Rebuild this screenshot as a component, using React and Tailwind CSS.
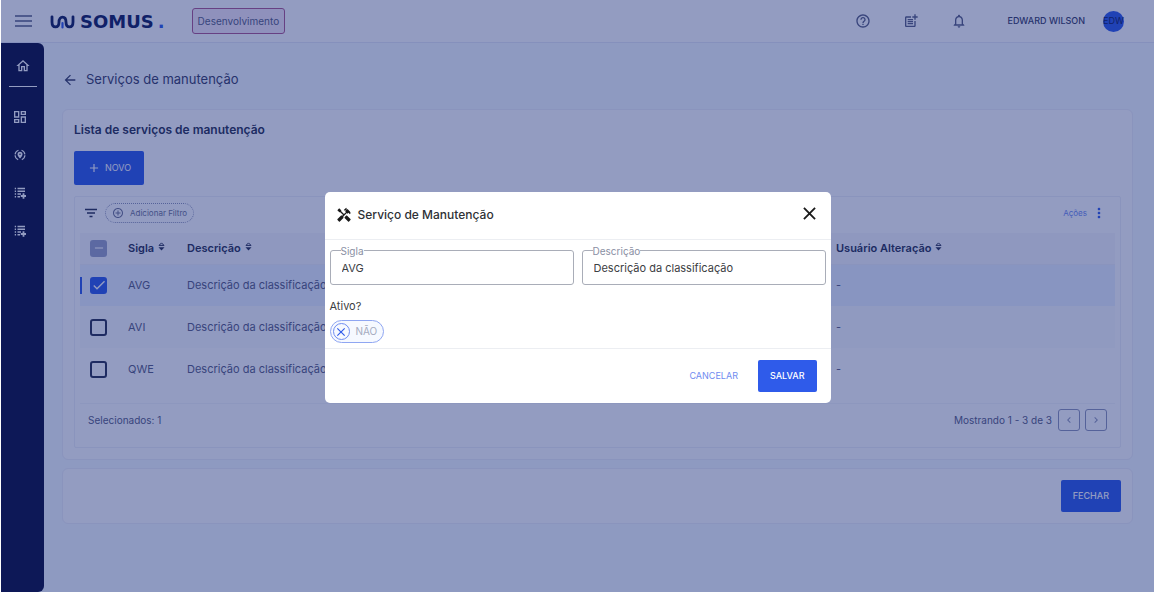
import { useState } from "react";
import {
  MdAdd,
  MdAddCircleOutline,
  MdArrowBack,
  MdCheck,
  MdChevronLeft,
  MdChevronRight,
  MdClose,
  MdHandyman,
  MdHelpOutline,
  MdMoreVert,
  MdNotificationsNone,
  MdOutlineDashboard,
  MdOutlineHome,
  MdPostAdd,
  MdRemove,
} from "react-icons/md";

const services = [
  { id: 1, sigla: "AVG", descricao: "Descrição da classificação", usuario: "-" },
  { id: 2, sigla: "AVI", descricao: "Descrição da classificação", usuario: "-" },
  { id: 3, sigla: "QWE", descricao: "Descrição da classificação", usuario: "-" },
];

function Logo() {
  return (
    <a href="#" className="flex items-center gap-1 text-[#11205e]" aria-label="Somus">
      <svg width="26" height="14" viewBox="0 0 26 14" fill="none" strokeWidth="2.8" strokeLinecap="round">
        <path d="M2 1.8 V7 C2 13.6 9 13.6 9 7 C9 0.4 16 0.4 16 7 C16 13.6 23 13.6 23 7 V1.8" stroke="currentColor" />
        <path d="M12.500 8 V12.400" stroke="#2f5bea" strokeWidth="2.2" />
      </svg>
      <span className="flex items-baseline font-['DejaVu_Sans',sans-serif] text-lg leading-5 font-bold">
        SOMUS<span className="ml-1 text-[#2f5bea]">.</span>
      </span>
    </a>
  );
}

function PinIcon() {
  return (
    <svg width="12" height="12" viewBox="0 0 24 24" fill="none">
      <path d="M9 2.5 A10 10 0 0 0 9 21.5 M15 2.5 A10 10 0 0 1 15 21.5" stroke="currentColor" strokeWidth="2.4" strokeDasharray="11 2" />
      <path d="M12 5.5a5 5 0 0 0-5 5c0 3.6 5 8.5 5 8.5s5-4.9 5-8.5a5 5 0 0 0-5-5z" fill="currentColor" />
      <circle cx="12" cy="10.5" r="1.5" fill="#0b0b3a" />
    </svg>
  );
}

function ListAddIcon() {
  return (
    <svg width="12" height="12" viewBox="0 0 24 24" fill="none" stroke="currentColor" strokeWidth="2.6">
      <path d="M7 3h15M7 8.500h15M7 14h7M7 19.500h5" />
      <path d="M1.500 3h2.600M1.500 8.500h2.600M1.500 14h2.600M1.500 19.500h2.600" />
      <path d="M19 12.500v11M13.500 18h11" strokeWidth="3.6" />
    </svg>
  );
}

function FilterIcon() {
  return (
    <svg width="16" height="16" viewBox="0 0 16 16" fill="none" stroke="#2b3252" strokeWidth="1.6">
      <path d="M2 4.500h12M4 8h8M6.500 11.500h3" />
    </svg>
  );
}

function SortIcon() {
  return (
    <svg width="7" height="9" viewBox="0 0 7 9" fill="none" className="mb-1">
      <path d="M1 3.400 L3.500 0.900 L6 3.400 Z" stroke="currentColor" strokeWidth="1" strokeLinejoin="round" />
      <path d="M0.500 5.200 H6.500 L3.500 8.500 Z" fill="currentColor" />
    </svg>
  );
}

function CheckBox({ checked, indeterminate, onChange, label }) {
  return (
    <span className="grid size-[17px] place-items-center">
      <input
        type="checkbox"
        aria-label={label}
        checked={checked}
        onChange={onChange}
        className={
          "col-start-1 row-start-1 size-[17px] appearance-none rounded-[3px] " +
          (indeterminate
            ? "bg-[#9ba3c6]"
            : checked
              ? "bg-[#2f5bea]"
              : "border-2 border-[#2b3252]")
        }
      />
      {indeterminate && <MdRemove className="pointer-events-none col-start-1 row-start-1 size-3.5 text-white" />}
      {!indeterminate && checked && (
        <MdCheck className="pointer-events-none col-start-1 row-start-1 size-4 text-white" />
      )}
    </span>
  );
}

function SortHeader({ children }) {
  return (
    <th className="pl-2 text-left font-semibold">
      <button className="flex items-center gap-1">
        {children}
        <SortIcon />
      </button>
    </th>
  );
}

function Field({ id, label, value, onChange }) {
  return (
    <div className="relative flex-1">
      <label htmlFor={id} className="absolute -top-[5px] left-[11px] bg-white text-[10px] leading-3 text-[#8a8fa3]">
        {label}
      </label>
      <input
        id={id}
        type="text"
        value={value}
        onChange={onChange}
        className="h-[35px] w-full rounded-[3px] border border-[#a9adb8] px-[11px] text-[11px] text-[#3c4043]"
      />
    </div>
  );
}

function Header() {
  return (
    <header className="flex h-[43px] items-center border-b border-[#e6eaf6] bg-white text-[#5a6082]">
      <button aria-label="Menu" className="ml-[14px]">
        <svg width="17" height="12" viewBox="0 0 17 12" stroke="currentColor" strokeWidth="1.3">
          <path d="M0 1h17M0 6h17M0 11h17" />
        </svg>
      </button>
      <div className="ml-[18px] pt-0.5">
        <Logo />
      </div>
      <span className="ml-[27px] rounded-[3px] border border-[#b0588f] bg-[#f7ecf6] px-[5px] py-1 text-[10px] leading-4 text-[#5a6082]">
        Desenvolvimento
      </span>
      <div className="ml-auto flex items-center gap-8 pr-[30px]">
        <button aria-label="Ajuda"><MdHelpOutline className="size-4" /></button>
        <button aria-label="Novo registro"><MdPostAdd className="size-4" /></button>
        <button aria-label="Notificações"><MdNotificationsNone className="size-4" /></button>
        <div className="ml-2 flex items-center gap-[18px]">
          <span className="text-[9px] font-medium text-[#3a4066]">EDWARD WILSON</span>
          <span className="flex size-[21px] items-center justify-center rounded-full bg-[#2f5bea] text-[9px] text-[#11205e]">
            EDW
          </span>
        </div>
      </div>
    </header>
  );
}

function Sidebar() {
  return (
    <nav className="flex w-[43px] shrink-0 flex-col items-center rounded-r-md bg-[#0b0f3e] pt-[15px] text-white">
      <a href="#" aria-label="Início"><MdOutlineHome className="size-4" /></a>
      <div className="mt-3 h-px w-7 bg-white" />
      <a href="#" aria-label="Painel" className="mt-[22px] -ml-1.5"><MdOutlineDashboard className="size-4" /></a>
      <div className="mt-6 -ml-1.5 flex flex-col gap-[26px]">
        <a href="#" aria-label="Localização"><PinIcon /></a>
        <a href="#" aria-label="Cadastros"><ListAddIcon /></a>
        <a href="#" aria-label="Listas"><ListAddIcon /></a>
      </div>
    </nav>
  );
}

function ServiceModal({ onClose }) {
  const [sigla, setSigla] = useState("AVG");
  const [descricao, setDescricao] = useState("Descrição da classificação");
  const [ativo, setAtivo] = useState(false);

  return (
    <div className="absolute inset-0 flex items-center justify-center bg-[#102476]/45 pt-[3px]">
      <div role="dialog" aria-label="Serviço de Manutenção" className="w-[506px] rounded-[5px] bg-white">
        <div className="flex h-12 items-center border-b border-[#eceef2] pr-[15px] pb-0.5 pl-[11px]">
          <MdHandyman className="size-4 text-[#1a1a1a]" />
          <h2 className="ml-1.5 text-xs font-medium text-[#2e3135]">Serviço de Manutenção</h2>
          <button aria-label="Fechar janela" onClick={onClose} className="ml-auto pb-0.5 text-[#1a1a1a]">
            <svg width="13" height="13" viewBox="0 0 14 14" stroke="currentColor" strokeWidth="2">
              <path d="M1 1 L13 13 M13 1 L1 13" />
            </svg>
          </button>
        </div>
        <div className="px-[5px] pt-2.5 pb-[5px]">
          <div className="flex gap-2">
            <Field id="sigla" label="Sigla" value={sigla} onChange={(ev) => setSigla(ev.target.value)} />
            <Field id="descricao" label="Descrição" value={descricao} onChange={(ev) => setDescricao(ev.target.value)} />
          </div>
          <p className="mt-[13px] text-[11px] leading-4 text-[#3c4043]">Ativo?</p>
          <label className="relative mt-1.5 flex h-[23px] w-[54px] items-center gap-1.5 rounded-full border border-[#8fa6f2] bg-[#f6f9ff] pl-0.5 text-[10px] text-[#a5abc0]">
            <input
              type="checkbox"
              checked={ativo}
              onChange={(ev) => setAtivo(ev.target.checked)}
              className="sr-only"
            />
            <span className="flex size-[17px] shrink-0 items-center justify-center rounded-full border border-[#6f8cf0] text-[#2f5bea]">
              {ativo ? <MdCheck className="size-3" /> : <MdClose className="size-3.5" />}
            </span>
            {ativo ? "SIM" : "NÃO"}
          </label>
        </div>
        <div className="flex items-center justify-end gap-5 border-t border-[#eceef2] px-3.5 py-[11px] text-[9px]">
          <button onClick={onClose} className="text-[#6f8cf0]">CANCELAR</button>
          <button className="h-8 rounded-xs bg-[#2f5bea] px-3 font-medium text-white">SALVAR</button>
        </div>
      </div>
    </div>
  );
}

export default function App() {
  const [open, setOpen] = useState(true);
  const [selected, setSelected] = useState([1]);

  function toggleRow(id) {
    setSelected(selected.includes(id) ? selected.filter((s) => s !== id) : [...selected, id]);
  }

  return (
    <div className="relative flex min-h-screen flex-col border-r-2 border-l border-white bg-[#f6fbff] bg-clip-padding font-[Inter,sans-serif]">
      <Header />
      <div className="flex flex-1">
        <Sidebar />
        <main className="min-w-0 flex-1 pr-[21px] pl-[18px]">
          <div className="flex h-[66px] items-center gap-2 pt-2 text-[#3a4066]">
            <a href="#" aria-label="Voltar"><MdArrowBack className="size-4" /></a>
            <h1 className="text-[13px]">Serviços de manutenção</h1>
          </div>

          <section className="rounded-md border border-[#eef0f8] bg-white p-[11px]">
            <h2 className="text-xs leading-[18px] font-semibold text-[#2b3252]">Lista de serviços de manutenção</h2>
            <button
              onClick={() => setOpen(true)}
              className="mt-3 flex h-[34px] w-[70px] items-center justify-center gap-1 rounded-xs bg-[#2f5bea] text-[9px] text-white"
            >
              <MdAdd className="size-3.5" /> NOVO
            </button>

            <div className="mt-[11px] rounded-xs border border-[#eef0f8] px-[5px] pb-4">
              <div className="flex h-9 items-center pr-2 pb-1 pl-[3px]">
                <FilterIcon />
                <button className="ml-1.5 flex h-5 items-center gap-1.5 rounded-full border border-dotted border-[#8f96b8] px-1.5 text-[8px] text-[#6f7594]">
                  <MdAddCircleOutline className="size-3" /> Adicionar Filtro
                </button>
                <button className="ml-auto flex items-center gap-1 text-[8px] text-[#6f8cf0]">
                  Ações <MdMoreVert className="size-4 text-[#2f5bea]" />
                </button>
              </div>

              <table className="w-full table-fixed text-[11px] text-[#5a6082]">
                <colgroup>
                  <col className="w-10" />
                  <col className="w-[59px]" />
                  <col />
                  <col className="w-[287px]" />
                </colgroup>
                <thead>
                  <tr className="h-[31px] border-b border-[#eef0f8] bg-[#f7f8fc] text-[#2b3252]">
                    <th className="pl-2.5">
                      <CheckBox
                        label="Selecionar todos"
                        indeterminate={selected.length > 0 && selected.length < services.length}
                        checked={selected.length === services.length}
                        onChange={() => setSelected(selected.length ? [] : services.map((s) => s.id))}
                      />
                    </th>
                    <SortHeader>Sigla</SortHeader>
                    <SortHeader>Descrição</SortHeader>
                    <SortHeader>Usuário Alteração</SortHeader>
                  </tr>
                </thead>
                <tbody>
                  {services.map((service) => {
                    const active = selected.includes(service.id);
                    return (
                      <tr key={service.id} className={"h-[42px] " + (active ? "bg-[#ebf2ff]" : "even:bg-[#fafbfe]")}>
                        <td>
                          <div className="flex items-center">
                            <span className={"mr-2 h-[17px] w-0.5 " + (active ? "bg-[#2f5bea]" : "")} />
                            <CheckBox
                              label={"Selecionar " + service.sigla}
                              checked={active}
                              onChange={() => toggleRow(service.id)}
                            />
                          </div>
                        </td>
                        <td className="pl-2">{service.sigla}</td>
                        <td className="pl-2">{service.descricao}</td>
                        <td className="pl-2">{service.usuario}</td>
                      </tr>
                    );
                  })}
                </tbody>
              </table>

              <div className="mt-[13px] flex items-center justify-between border-t border-[#f5f6fa] pt-[5px] pr-2 pl-2 text-[10px] text-[#5a6082]">
                <span>Selecionados: {selected.length}</span>
                <div className="flex items-center">
                  <span>Mostrando 1 - 3 de 3</span>
                  <button aria-label="Página anterior" className="ml-1.5 flex size-[22px] items-center justify-center rounded-[3px] border border-[#8f96b8] text-[#8f96b8]">
                    <MdChevronLeft className="size-3" />
                  </button>
                  <button aria-label="Próxima página" className="ml-[5px] flex size-[22px] items-center justify-center rounded-[3px] border border-[#8f96b8] text-[#8f96b8]">
                    <MdChevronRight className="size-3" />
                  </button>
                </div>
              </div>
            </div>
          </section>

          <section className="mt-2 flex justify-end rounded-md border border-[#eef0f8] bg-white px-[11px] py-[11px]">
            <button className="h-8 rounded-xs bg-[#2f5bea] px-3 text-[9px] font-medium text-white">FECHAR</button>
          </section>
        </main>
      </div>
      {open && <ServiceModal onClose={() => setOpen(false)} />}
    </div>
  );
}
